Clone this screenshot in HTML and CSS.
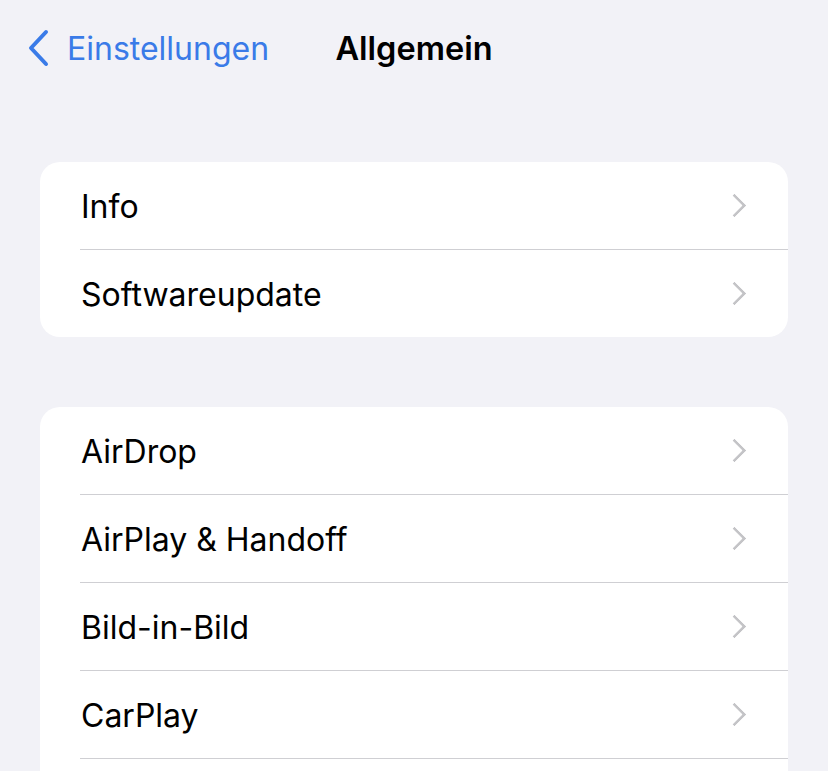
FILE: index.html
```html
<!DOCTYPE html>
<html lang="de">
<head>
    <meta charset="UTF-8">
    <meta name="viewport" content="width=device-width, initial-scale=1.0">
    <title>Allgemein</title>
    <link rel="stylesheet" href="styles.css">
</head>
<body>
    <header class="nav-bar">
        <a class="back-link" href="#">
            <svg class="back-chevron" width="24" height="38" viewBox="0 0 24 38">
                <path d="M20 3 L5 19 L20 35" fill="none" stroke="currentColor" stroke-width="4" stroke-linecap="round" stroke-linejoin="round"/>
            </svg>
            <span>Einstellungen</span>
        </a>
        <h1 class="nav-title">Allgemein</h1>
        <div></div>
    </header>

    <section class="group">
        <a class="row" href="#"><span class="row-label">Info</span><span class="chevron"></span></a>
        <a class="row" href="#"><span class="row-label">Softwareupdate</span><span class="chevron"></span></a>
    </section>

    <!-- this list keeps going below the fold -->
    <section class="group group-continued">
        <a class="row" href="#"><span class="row-label">AirDrop</span><span class="chevron"></span></a>
        <a class="row" href="#"><span class="row-label">AirPlay &amp; Handoff</span><span class="chevron"></span></a>
        <a class="row" href="#"><span class="row-label">Bild-in-Bild</span><span class="chevron"></span></a>
        <a class="row" href="#"><span class="row-label">CarPlay</span><span class="chevron"></span></a>
    </section>
</body>
</html>
```

FILE: styles.css
```css
body {
    margin: 0;
    background-color: #f2f2f7;
    font-family: 'Inter', 'Liberation Sans', sans-serif;
    color: #000;
    overflow: hidden;
}

a {
    color: inherit;
    text-decoration: none;
}

.nav-bar {
    display: grid;
    grid-template-columns: 1fr auto 1fr;
    align-items: center;
    height: 96px;
    margin-bottom: 66px;
}

.back-link {
    display: flex;
    align-items: center;
    gap: 17px;
    padding-left: 26px;
    color: #3a7be8;
    font-size: 32px;
}

.back-chevron {
    display: block;
}

.nav-title {
    margin: 0;
    font-size: 32.5px;
    font-weight: 600;
}

.group {
    margin: 0 40px 70px;
    background-color: #fff;
    border-radius: 20px;
    overflow: hidden;
}
.group-continued {
    padding-bottom: 60px;
}

.row {
    display: flex;
    align-items: center;
    justify-content: space-between;
    height: 87px;
    margin-left: 40px;
    padding-left: 1px;
    padding-right: 45px;
    border-bottom: 1px solid #cfcfd3;
    font-size: 32px;
}
.row-label {
    padding-top: 2px;
}
.group .row:last-child {
    border-bottom: none;
}
.group-continued .row:last-child {
    border-bottom: 1px solid #cfcfd3;
}

.chevron {
    width: 14px;
    height: 14px;
    border-top: 3px solid #c4c4c7;
    border-right: 3px solid #c4c4c7;
    border-radius: 1px;
    transform: rotate(45deg);
}
```
